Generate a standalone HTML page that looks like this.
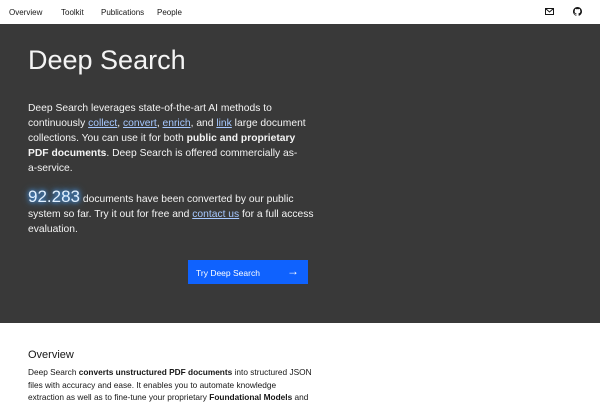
<!DOCTYPE html>
<html><head><style>
*{margin:0;padding:0;box-sizing:border-box}
body{width:600px;height:400px;overflow:hidden;background:#fff;font-family:"Liberation Sans",sans-serif}
nav{height:24px;position:relative;font-size:8px;color:#161616}
nav span{position:absolute;top:8px}
.hero{position:absolute;top:24px;left:0;width:600px;height:299px;background:#393939;color:#f4f4f4}
h1{position:absolute;left:28px;top:21px;font-size:27px;font-weight:300;letter-spacing:0}
.p1{position:absolute;left:28px;top:77px;width:278px;font-size:10.3px;line-height:15px}
a{color:#a6c8ff;text-decoration:underline}
.p2{position:absolute;left:28px;top:165px;width:290px;font-size:10.3px;line-height:15px}
.num{font-size:17px;color:#e0f0ff;text-shadow:0 0 4px #4aa3ff,0 0 8px #4aa3ff}
.btn{position:absolute;left:188px;top:236px;width:120px;height:24px;background:#0f62fe;color:#fff;font-size:8.5px;padding:8px 0 0 8px}
.btn b{position:absolute;right:9px;top:4px;font-weight:normal;font-size:12px}
.ov{position:absolute;left:28px;top:349px;font-size:11px;color:#161616}
.ot{position:absolute;left:28px;top:366px;width:320px;font-size:8.3px;line-height:12.5px;color:#161616}
</style></head><body>
<nav><span style="left:9px">Overview</span><span style="left:61px">Toolkit</span><span style="left:101px">Publications</span><span style="left:157px">People</span>
<svg style="position:absolute;left:545px;top:8px" width="9" height="7" viewBox="0 0 9 7"><rect x=".5" y=".5" width="8" height="6" fill="none" stroke="#161616"/><path d="M.5 .5L4.5 4L8.5 .5" fill="none" stroke="#161616"/></svg>
<svg style="position:absolute;left:573px;top:7px" width="9" height="9" viewBox="0 0 16 16"><path fill="#161616" d="M8 0C3.6 0 0 3.6 0 8c0 3.5 2.3 6.5 5.5 7.6.4.1.5-.2.5-.4v-1.4c-2.2.5-2.7-1-2.7-1-.4-.9-.9-1.2-.9-1.2-.7-.5.1-.5.1-.5.8.1 1.2.8 1.2.8.7 1.3 1.9.9 2.3.7.1-.5.3-.9.5-1.1-1.8-.2-3.6-.9-3.6-4 0-.9.3-1.6.8-2.1-.1-.2-.4-1 .1-2.1 0 0 .7-.2 2.2.8.6-.2 1.3-.3 2-.3s1.4.1 2 .3c1.5-1 2.2-.8 2.2-.8.4 1.1.2 1.9.1 2.1.5.6.8 1.3.8 2.1 0 3.1-1.9 3.7-3.6 3.9.3.3.5.8.5 1.5v2.2c0 .2.1.5.6.4C13.7 14.5 16 11.5 16 8c0-4.4-3.6-8-8-8z"/></svg>
</nav>
<div class="hero">
<h1>Deep Search</h1>
<div class="p1">Deep Search leverages state-of-the-art AI methods to continuously <a>collect</a>, <a>convert</a>, <a>enrich</a>, and <a>link</a> large document collections. You can use it for both <b>public and proprietary PDF documents</b>. Deep Search is offered commercially as-<br>a-service.</div>
<div class="p2"><span class="num">92.283</span> documents have been converted by our public system so far. Try it out for free and <a>contact us</a> for a full access evaluation.</div>
<div class="btn">Try Deep Search<b>→</b></div>
</div>
<div class="ov">Overview</div>
<div class="ot">Deep Search <b>converts unstructured PDF documents</b> into structured JSON<br>files with accuracy and ease. It enables you to automate knowledge<br>extraction as well as to fine-tune your proprietary <b>Foundational Models</b> and</div>
</body></html>
